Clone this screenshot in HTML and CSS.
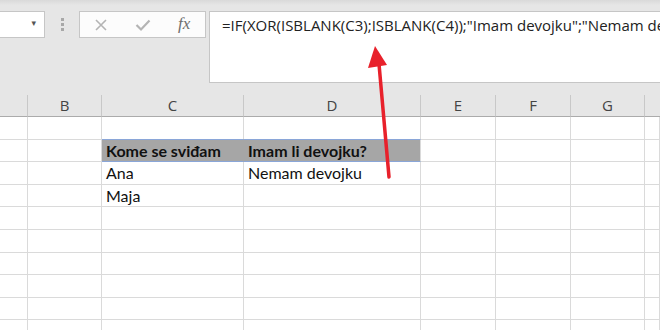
FILE: index.html
```html
<!DOCTYPE html>
<html lang="sr">
<head>
  <meta charset="UTF-8" />
  <title>XOR - Excel</title>
  <link rel="stylesheet" href="styles.css">
</head>
<body>

<div class="toolbar">
  <div class="name-box">
    <span class="dropdown">&#9662;</span>
  </div>
  <div class="grip">
    <span></span><span></span><span></span>
  </div>
  <div class="fx-buttons">
    <svg class="btn-x" width="14" height="14" viewBox="0 0 14 14"><path d="M2 2 L12 12 M12 2 L2 12" stroke="#b4b4b4" stroke-width="1.6" fill="none"/></svg>
    <svg class="btn-ok" width="16" height="14" viewBox="0 0 16 14"><path d="M1.5 7 L6 11.5 L14.5 2.5" stroke="#b4b4b4" stroke-width="2.2" fill="none"/></svg>
    <span class="fx">fx</span>
  </div>
  <div class="formula">=IF(XOR(ISBLANK(C3);ISBLANK(C4));"Imam devojku";"Nemam devojku")</div>
</div>

<div class="sheet">
  <div class="row head">
    <div class="cell a"></div>
    <div class="cell b">B</div>
    <div class="cell c">C</div>
    <div class="cell d">D</div>
    <div class="cell e">E</div>
    <div class="cell f">F</div>
    <div class="cell g">G</div>
    <div class="cell h"></div>
  </div>
  <div class="row">
    <div class="cell a"></div><div class="cell b"></div><div class="cell c"></div><div class="cell d"></div>
    <div class="cell e"></div><div class="cell f"></div><div class="cell g"></div><div class="cell h"></div>
  </div>
  <div class="row">
    <div class="cell a"></div><div class="cell b"></div>
    <div class="cell c title">Kome se sviđam</div>
    <div class="cell d title">Imam li devojku?</div>
    <div class="cell e"></div><div class="cell f"></div><div class="cell g"></div><div class="cell h"></div>
  </div>
  <div class="row">
    <div class="cell a"></div><div class="cell b"></div>
    <div class="cell c">Ana</div>
    <div class="cell d">Nemam devojku</div>
    <div class="cell e"></div><div class="cell f"></div><div class="cell g"></div><div class="cell h"></div>
  </div>
  <div class="row">
    <div class="cell a"></div><div class="cell b"></div>
    <div class="cell c">Maja</div>
    <div class="cell d"></div>
    <div class="cell e"></div><div class="cell f"></div><div class="cell g"></div><div class="cell h"></div>
  </div>
  <div class="row">
    <div class="cell a"></div><div class="cell b"></div><div class="cell c"></div><div class="cell d"></div>
    <div class="cell e"></div><div class="cell f"></div><div class="cell g"></div><div class="cell h"></div>
  </div>
  <div class="row">
    <div class="cell a"></div><div class="cell b"></div><div class="cell c"></div><div class="cell d"></div>
    <div class="cell e"></div><div class="cell f"></div><div class="cell g"></div><div class="cell h"></div>
  </div>
  <div class="row">
    <div class="cell a"></div><div class="cell b"></div><div class="cell c"></div><div class="cell d"></div>
    <div class="cell e"></div><div class="cell f"></div><div class="cell g"></div><div class="cell h"></div>
  </div>
  <div class="row">
    <div class="cell a"></div><div class="cell b"></div><div class="cell c"></div><div class="cell d"></div>
    <div class="cell e"></div><div class="cell f"></div><div class="cell g"></div><div class="cell h"></div>
  </div>
  <div class="row">
    <div class="cell a"></div><div class="cell b"></div><div class="cell c"></div><div class="cell d"></div>
    <div class="cell e"></div><div class="cell f"></div><div class="cell g"></div><div class="cell h"></div>
  </div>
  <div class="row">
    <div class="cell a"></div><div class="cell b"></div><div class="cell c"></div><div class="cell d"></div>
    <div class="cell e"></div><div class="cell f"></div><div class="cell g"></div><div class="cell h"></div>
  </div>
</div>

<!-- strelica preko svega -->
<svg class="arrow" width="660" height="330" viewBox="0 0 660 330">
  <path d="M389 177 L379 64" stroke="#e8212b" stroke-width="3.5" stroke-linecap="round" fill="none"/>
  <polygon points="375,46 368,68 387,65" fill="#e8212b"/>
</svg>

</body>
</html>
```

FILE: styles.css
```css
body {
  margin: 0;
  width: 660px;
  height: 330px;
  overflow: hidden;
  background: #e6e6e6;
  position: relative;
}
.toolbar {
  display: flex;
  align-items: flex-start;
  height: 95px;
  padding-top: 11px;
  box-sizing: border-box;
  background: linear-gradient(#d9d9d9, #e6e6e6 5px);
}
.name-box {
  width: 46px;
  height: 27px;
  margin-left: -1px;
  box-sizing: border-box;
  background: white;
  border: 1px solid #c6c6c6;
  position: relative;
}
.dropdown {
  position: absolute;
  right: 8px;
  top: 6px;
  font-size: 9px;
  color: #555;
  font-family: "DejaVu Sans", sans-serif;
}
.grip {
  width: 34px;
  height: 27px;
  display: flex;
  flex-direction: column;
  align-items: center;
  justify-content: center;
  gap: 2px;
}
.grip span {
  width: 3px;
  height: 3px;
  background: #a8a8a8;
}
.fx-buttons {
  width: 127px;
  height: 27px;
  box-sizing: border-box;
  background: #fcfcfc;
  border: 1px solid #c6c6c6;
  display: flex;
  align-items: center;
  padding-left: 14px;
}
.btn-x { margin-right: 27px; }
.btn-ok { margin-right: 27px; }
.fx {
  font-family: "Liberation Serif", serif;
  font-style: italic;
  font-size: 17px;
  color: #6e6e6e;
  margin-top: -2px;
}
.formula {
  flex: 1;
  height: 72px;
  margin-left: 3px;
  margin-right: -20px;
  box-sizing: border-box;
  background: white;
  border: 1px solid #c6c6c6;
  padding: 3px 0 0 12px;
  white-space: nowrap;
  overflow: hidden;
  font-family: "Open Sans", sans-serif;
  font-size: 15px;
  color: #222;
}
.sheet {
  font-family: Lato, sans-serif;
  font-size: 16px;
  color: #111;
}
.row {
  display: flex;
  height: 22.6px;
}
.cell {
  box-sizing: border-box;
  height: 100%;
  border-right: 1px solid #dadada;
  border-bottom: 1px solid #dadada;
  background: white;
  padding-left: 4px;
  line-height: 22px;
  white-space: nowrap;
}
.a { width: 28px; }
.b { width: 74px; }
.c { width: 142px; }
.d { width: 177px; }
.e { width: 75px; }
.f { width: 75px; }
.g { width: 74px; }
.h { flex: 1; }
.head {
  height: 22px;
}
.head .cell {
  background: #e6e6e6;
  border-right: 1px solid #c8c8c8;
  border-bottom: 1px solid #ababab;
  padding: 0;
  text-align: center;
  font-family: "Open Sans", sans-serif;
  font-size: 15px;
  color: #444;
  line-height: 21px;
}
.head .h { border-right: none; }
.title {
  background: #a6a6a6;
  font-weight: bold;
  border-top: 1px solid #8aa6d8;
  border-bottom: 1px solid #8aa6d8;
  border-right-color: #a6a6a6;
  margin-top: -1px;
  height: calc(100% + 1px);
}
.title.d { border-right-color: #dadada; }
.arrow {
  position: absolute;
  left: 0;
  top: 0;
  pointer-events: none;
}
```
